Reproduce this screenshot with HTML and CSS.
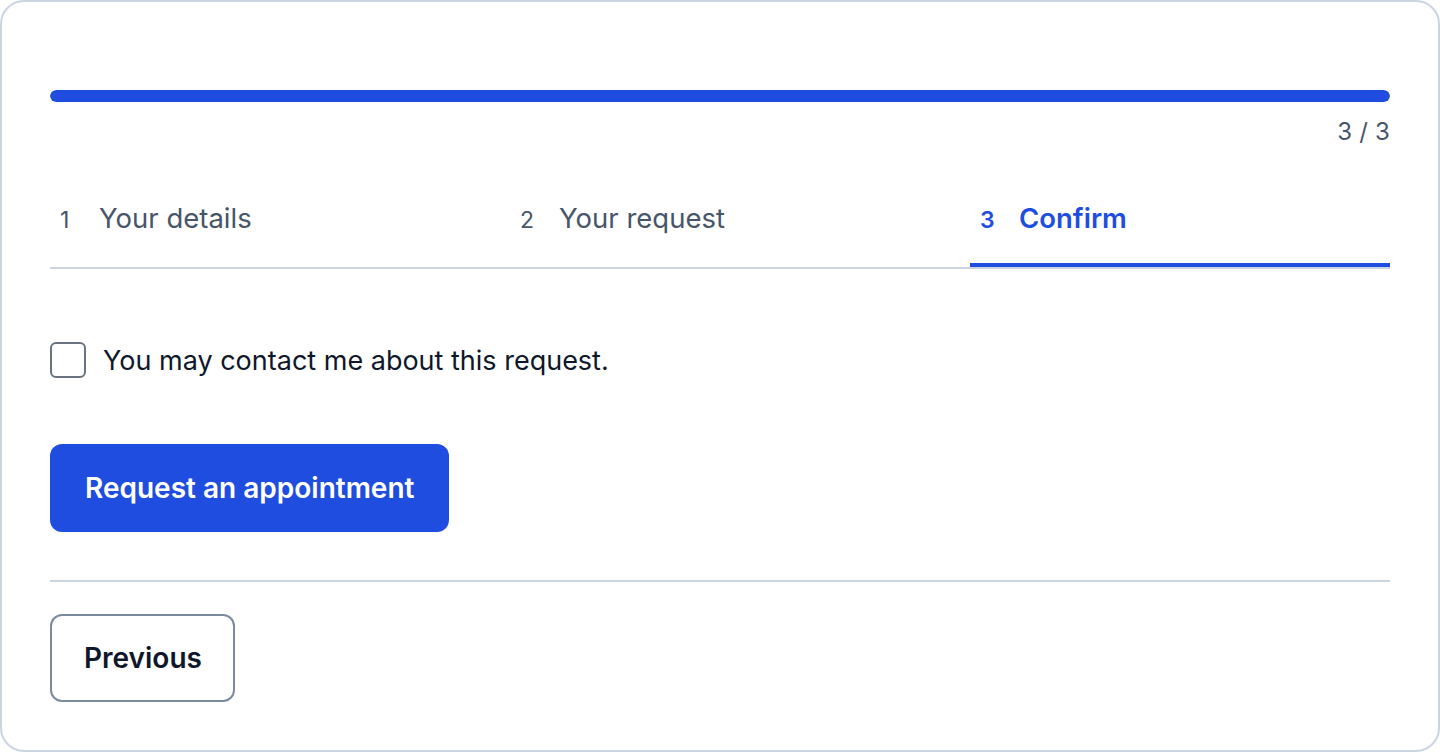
FILE: index.html
```html
<!DOCTYPE html>
<html lang="en">
<head>
<meta charset="utf-8">
<title>Request an appointment</title>
<link rel="stylesheet" href="styles.css">
</head>
<body>
<div class="card">
  <div class="progress">
    <div class="progress-track"><div class="progress-fill" style="width:100%"></div></div>
    <div class="progress-count">3 / 3</div>
  </div>
  <div class="tabs">
    <div class="tab"><span class="tab-num">1</span><span class="tab-label">Your details</span></div>
    <div class="tab"><span class="tab-num">2</span><span class="tab-label">Your request</span></div>
    <div class="tab active"><span class="tab-num">3</span><span class="tab-label">Confirm</span></div>
  </div>
  <label class="check">
    <span class="check-box"></span>
    <span class="check-text">You may contact me about this request.</span>
  </label>
  <div class="actions">
    <button class="btn btn-primary">Request an appointment</button>
  </div>
  <div class="footer">
    <button class="btn btn-secondary">Previous</button>
  </div>
</div>
</body>
</html>
```
FILE: styles.css
```css
* { box-sizing: border-box; }
html, body { margin: 0; padding: 0; background: #ffffff; }
body {
  font-family: Inter, "Liberation Sans", sans-serif;
  color: #0f172a;
}
.card {
  width: 1440px;
  height: 752px;
  border: 2px solid #cbd5e1;
  border-radius: 24px;
  padding: 88px 48px 0 48px;
  display: flex;
  flex-direction: column;
}
.progress-track {
  height: 12px;
  border-radius: 6px;
  background: #e2e8f0;
  overflow: hidden;
}
.progress-fill {
  height: 100%;
  background: #1f4ddf;
  border-radius: 6px;
}
.progress-count {
  text-align: right;
  font-size: 24px;
  line-height: 30px;
  margin-top: 15px;
  color: #475569;
  letter-spacing: 0.2px;
}
.tabs {
  display: grid;
  grid-template-columns: repeat(3, 1fr);
  column-gap: 40px;
  border-bottom: 2px solid #cbd5e1;
  margin-top: 50px;
}
.tab {
  display: flex;
  align-items: baseline;
  padding: 4px 12px 0 10px;
  height: 70px;
  color: #475569;
}
.tab-num { font-size: 23px; width: 39px; flex: none; }
.tab-label { font-size: 27.5px; }
.tab.active {
  color: #1f4ddf;
  border-bottom: 4px solid #1f4ddf;
}
.tab.active .tab-label { font-weight: 600; }
.tab.active .tab-num { font-weight: 600; }
.check {
  display: flex;
  align-items: center;
  gap: 17px;
  margin-top: 73px;
}
.check-box {
  width: 36px;
  height: 36px;
  border: 2px solid #6b7280;
  border-radius: 6px;
  flex: none;
}
.check-text { font-size: 27px; color: #0f172a; }
.actions {
  margin-top: 66px;
  padding-bottom: 48px;
  border-bottom: 2px solid #cbd5e1;
}
.btn {
  font-family: Inter, "Liberation Sans", sans-serif;
  font-size: 28px;
  font-weight: 600;
  height: 88px;
  border-radius: 12px;
  cursor: pointer;
}
.btn-primary {
  background: #1f4ddf;
  color: #ffffff;
  border: none;
  padding: 0 35px;
}
.footer { margin-top: 32px; }
.btn-secondary {
  background: #ffffff;
  color: #0f172a;
  border: 2px solid #7c8aa0;
  padding: 0 31px 0 32px;
}
```
